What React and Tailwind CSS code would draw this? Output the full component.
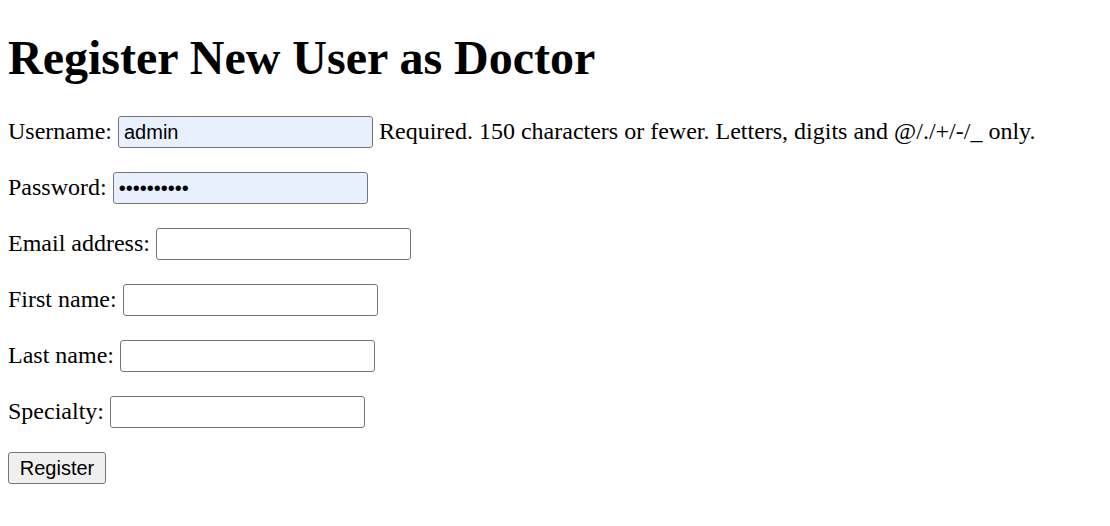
import React from "react";

const serif = { fontFamily: '"Liberation Serif", "Times New Roman", serif' };

function Field({ label, value, type = "text", filled = false, help }) {
  return (
    <div className="flex items-center h-8 text-[24px] leading-none text-black whitespace-nowrap" style={serif}>
      <span className="pb-[2px]">{label}</span>
      <input
        type={type}
        defaultValue={value}
        readOnly
        className={
          "ml-[6px] w-[255px] h-8 border border-[#767676] rounded-[3px] px-[5px] text-[20px] text-black outline-none font-['Liberation_Sans',Arial,sans-serif] " +
          (filled ? "bg-[#e8f0fe]" : "bg-white")
        }
      />
      {help && <span className="ml-[6px] pb-[2px]">{help}</span>}
    </div>
  );
}

export default function App() {
  return (
    <div className="bg-white w-[1110px] h-[526px] px-2 pt-[30px] text-black" style={serif}>
      <h1 className="text-[48px] font-bold leading-[55px] mb-[31px] whitespace-nowrap">
        Register New User as Doctor
      </h1>
      <div className="flex flex-col gap-6">
        <Field
          label="Username:"
          value="admin"
          filled
          help="Required. 150 characters or fewer. Letters, digits and @/./+/-/_ only."
        />
        <Field label="Password:" value="adminadmin" type="password" filled />
        <Field label="Email address:" />
        <Field label="First name:" />
        <Field label="Last name:" />
        <Field label="Specialty:" />
        <div className="h-8 flex items-center">
          <button className="h-8 w-[98px] border border-[#767676] rounded-[3px] bg-[#efefef] text-[20px] text-black font-['Liberation_Sans',Arial,sans-serif]">
            Register
          </button>
        </div>
      </div>
    </div>
  );
}
